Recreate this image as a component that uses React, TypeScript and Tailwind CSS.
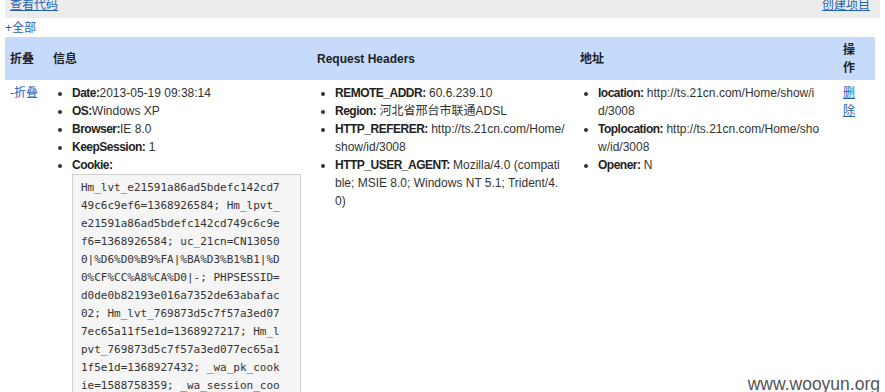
import React from "react";

const cookie =
  "Hm_lvt_e21591a86ad5bdefc142cd749c6c9ef6=1368926584; Hm_lpvt_e21591a86ad5bdefc142cd749c6c9ef6=1368926584; uc_21cn=CN130500|%D6%D0%B9%FA|%BA%D3%B1%B1|%D0%CF%CC%A8%CA%D0|-; PHPSESSID=d0de0b82193e016a7352de63abafac02; Hm_lvt_769873d5c7f57a3ed077ec65a11f5e1d=1368927217; Hm_lpvt_769873d5c7f57a3ed077ec65a11f5e1d=1368927432; _wa_pk_cookie=1588758359; _wa_session_cookie=1588758359; _wa_uv_cookie=1368927432";

const info: [string, string][] = [
  ["Date:", "2013-05-19 09:38:14"],
  ["OS:", "Windows XP"],
  ["Browser:", "IE 8.0"],
  ["KeepSession:", " 1"],
];

// line breaks as they fall in the original page
const headers: [string, string][] = [
  ["REMOTE_ADDR:", " 60.6.239.10"],
  ["Region:", " 河北省邢台市联通ADSL"],
  ["HTTP_REFERER:", " http://ts.21cn.com/Home/\nshow/id/3008"],
  ["HTTP_USER_AGENT:", " Mozilla/4.0 (compati\nble; MSIE 8.0; Windows NT 5.1; Trident/4.\n0)"],
];

const address: [string, string][] = [
  ["location:", " http://ts.21cn.com/Home/show/i\nd/3008"],
  ["Toplocation:", " http://ts.21cn.com/Home/sho\nw/id/3008"],
  ["Opener:", " N"],
];

function Item({ k, v }: { k: string; v: string }) {
  return (
    <li className="leading-[18px] whitespace-pre">
      <b className="text-[#222] tracking-[-0.5px]">{k}</b>
      <span>{v}</span>
    </li>
  );
}

export default function App() {
  return (
    <div
      className="relative w-[885px] h-[392px] overflow-hidden bg-white text-[12px] text-[#333]"
      style={{ fontFamily: '"Liberation Sans", Arial, "Noto Sans CJK SC", sans-serif' }}
    >
      {/* top bar */}
      <div className="mx-[5px] h-[18px] bg-[#ececec] flex items-start justify-between px-[5px] leading-[11px]">
        <a href="#" className="text-[#1f62b3] underline">查看代码</a>
        <a href="#" className="text-[#1f62b3] underline mr-[5px]">创建项目</a>
      </div>

      <div className="px-[5px] h-[19px] leading-[19px] pt-[1px] text-[#1f62b3]">+全部</div>

      {/* table */}
      <div className="mx-[5px] w-[870px]">
        <div className="grid grid-cols-[43px_264px_263px_263px_37px] h-[43px] bg-[#c6dafc] font-bold text-[#222] leading-[18px]">
          <div className="px-[5px] flex items-center">折叠</div>
          <div className="px-[5px] flex items-center">信息</div>
          <div className="px-[5px] flex items-center">Request Headers</div>
          <div className="px-[5px] flex items-center">地址</div>
          <div className="px-[5px] flex flex-col justify-center">
            <span>操</span>
            <span>作</span>
          </div>
        </div>

        <div className="grid grid-cols-[43px_264px_263px_263px_37px] pt-[4px]">
          <div className="px-[5px] leading-[18px] text-[#1f62b3]">-折叠</div>

          <div className="px-[5px]">
            <ul className="list-disc pl-[19px]">
              {info.map(([k, v]) => (
                <Item key={k} k={k} v={v} />
              ))}
              <li className="leading-[18px]">
                <b className="text-[#222] tracking-[-0.5px]">Cookie:</b>
                <div className="w-[229px] border border-[#cfcfcf] bg-[#f5f5f5] pl-[8px] pr-[19px] pt-[4px] pb-[4px]">
                  <div
                    className="w-[200px] break-all text-[11px] leading-[18px] text-[#333]"
                    style={{ fontFamily: '"DejaVu Sans Mono", "Liberation Mono", monospace' }}
                  >
                    {cookie}
                  </div>
                </div>
              </li>
            </ul>
          </div>

          <div className="px-[5px]">
            <ul className="list-disc pl-[18px]">
              {headers.map(([k, v]) => (
                <Item key={k} k={k} v={v} />
              ))}
            </ul>
          </div>

          <div className="px-[5px]">
            <ul className="list-disc pl-[18px]">
              {address.map(([k, v]) => (
                <Item key={k} k={k} v={v} />
              ))}
            </ul>
          </div>

          <div className="px-[5px] flex flex-col leading-[18px]">
            <a href="#" className="text-[#1f62b3] underline">删</a>
            <a href="#" className="text-[#1f62b3] underline">除</a>
          </div>
        </div>
      </div>

      {/* watermark */}
      <div className="absolute right-[5px] bottom-[-2px] text-[17.5px] leading-[20px] text-[#555]">
        www.wooyun.org
      </div>
    </div>
  );
}
